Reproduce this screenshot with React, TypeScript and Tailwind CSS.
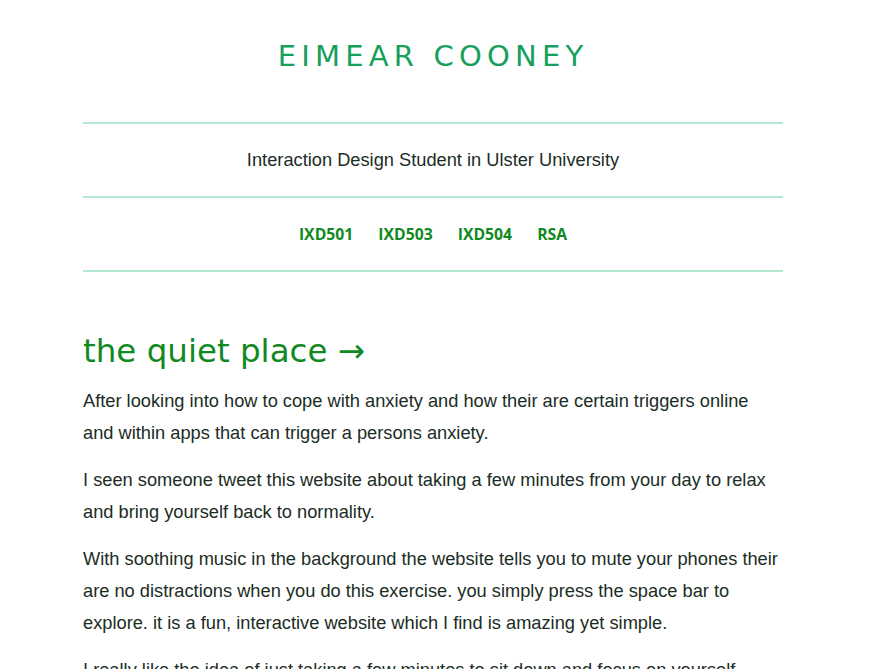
import React from "react";

export default function App() {
  const body = "font-['Liberation_Sans',Arial,sans-serif]";
  const mont = "font-['DejaVu_Sans',sans-serif]";
  return (
    <div className="w-[866px] bg-white min-h-[669px]">
      <div className="mx-auto w-[700px]">
        <header className="pt-[38px] pb-[48px] text-center">
          <h1 className={`${mont} text-[29px] leading-[36px] tracking-[5.2px] text-[#16a05c] font-normal`}>
            EIMEAR COONEY
          </h1>
        </header>
        <div className="border-t-2 border-[#b2ead0]">
          <p className={`${body} text-[18.25px] leading-[72px] text-center text-[#1b2d25]`}>
            Interaction Design Student in Ulster University
          </p>
        </div>
        <nav className="border-t-2 border-b-2 border-[#b2ead0] h-[76px] pt-[2px] flex items-center justify-center gap-[25px]">
          {["IXD501", "IXD503", "IXD504", "RSA"].map((t) => (
            <a key={t} className="font-['Open_Sans',sans-serif] font-bold text-[15.75px] text-[#0f8a20]">
              {t}
            </a>
          ))}
        </nav>
        <h2 className={`${mont} mt-[55px] text-[32.5px] leading-[48px] text-[#12891f] font-normal`}>
          the quiet place →
        </h2>
        <div className={`${body} text-[18.25px] leading-[32px] text-[#1b2d25] mt-[10px] flex flex-col gap-[15px]`}>
          <p>
            After looking into how to cope with anxiety and how their are certain triggers online and within apps that can trigger a persons anxiety.
          </p>
          <p>
            I seen someone tweet this website about taking a few minutes from your day to relax and bring yourself back to normality.
          </p>
          <p>
            With soothing music in the background the website tells you to mute your phones their are no distractions when you do this exercise. you simply press the space bar to explore. it is a fun, interactive website which I find is amazing yet simple.
          </p>
          <p>
            I really like the idea of just taking a few minutes to sit down and focus on yourself.
          </p>
        </div>
      </div>
    </div>
  );
}
